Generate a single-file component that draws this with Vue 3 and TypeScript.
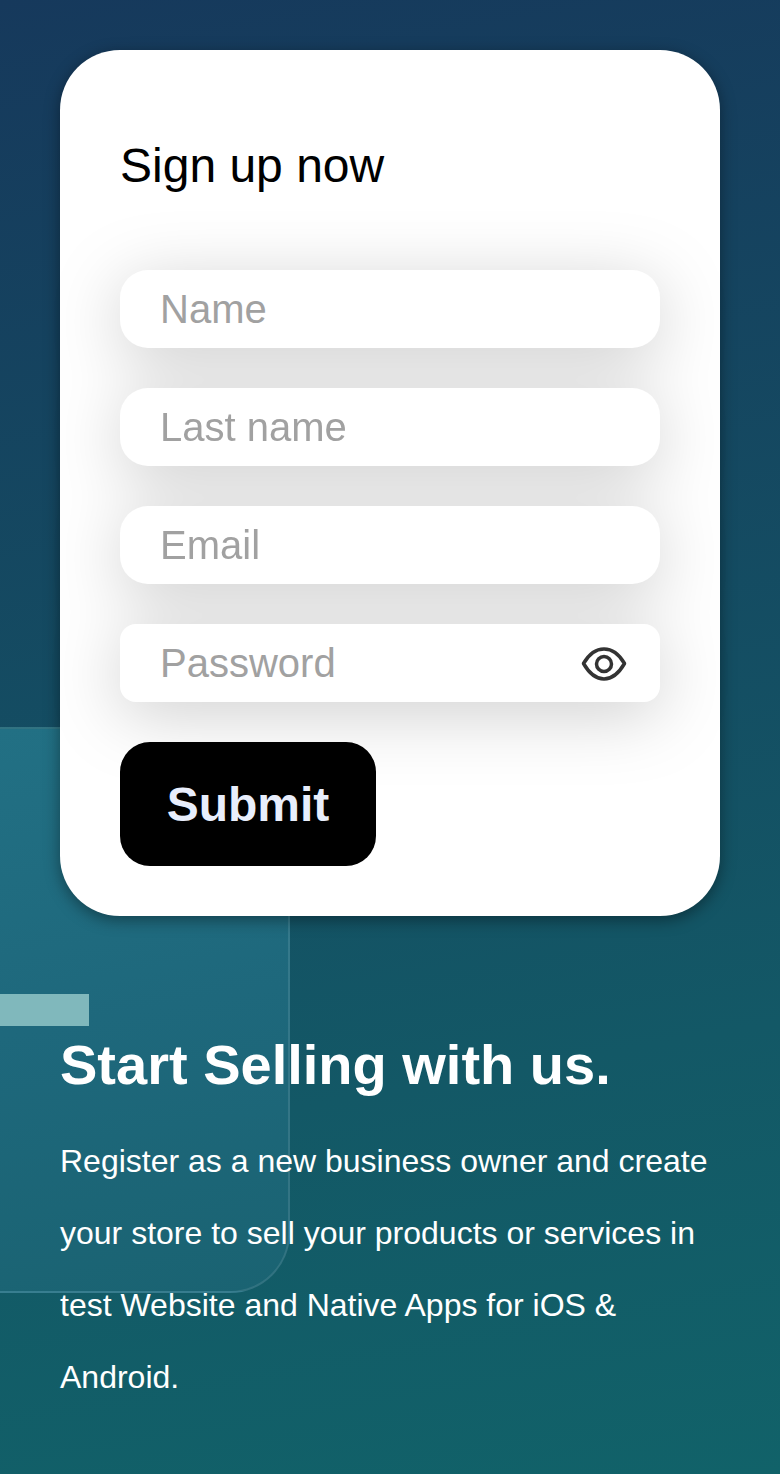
<script setup lang="ts">
const fields = [
  { placeholder: 'Name', type: 'text' },
  { placeholder: 'Last name', type: 'text' },
  { placeholder: 'Email', type: 'email' },
]
</script>

<template>
  <div class="page">
    <div class="panel"></div>
    <div class="bar"></div>
    <form class="card" @submit.prevent>
      <h2 class="title">Sign up now</h2>
      <div class="fields">
        <input v-for="f in fields" :key="f.placeholder" class="input" :type="f.type" :placeholder="f.placeholder" />
        <div class="password">
          <input class="input input-pw" type="password" placeholder="Password" />
          <svg class="eye" width="46" height="34" viewBox="0 0 46 34" fill="none" stroke="#333" stroke-width="3.500" stroke-linejoin="round">
            <path d="M2.500 16.500C8 7 15 2 23 2s15 5 20.500 14.500C38 26 31 32 23 32S8 26 2.500 16.500Z" />
            <circle cx="23" cy="17" r="7.500" />
          </svg>
        </div>
      </div>
      <button class="submit" type="submit">Submit</button>
    </form>
    <section class="intro">
      <h1 class="headline">Start Selling with us.</h1>
      <p class="copy">Register as a new business owner and create your store to sell your products or services in test Website and Native Apps for iOS &amp; Android.</p>
    </section>
  </div>
</template>

<style>
html, body { margin: 0; padding: 0; }
</style>

<style scoped>
.page {
  position: relative;
  width: 780px;
  height: 1474px;
  overflow: hidden;
  box-sizing: border-box;
  padding: 50px 60px 0;
  font-family: "Liberation Sans", Arial, sans-serif;
  background: linear-gradient(170deg, #16395c 0%, #135866 72%, #116269 100%);
}
.panel {
  position: absolute;
  left: -2px;
  top: 727px;
  width: 292px;
  height: 566px;
  box-sizing: border-box;
  border: 2px solid rgba(255, 255, 255, 0.1);
  border-radius: 0 0 60px 0;
  background: linear-gradient(170deg, #227084 0%, #1e687c 50%, #1a6372 100%);
}
.bar {
  position: absolute;
  left: 0;
  top: 994px;
  width: 89px;
  height: 32px;
  background: #80b8bc;
}
.card {
  position: relative;
  box-sizing: border-box;
  width: 660px;
  height: 866px;
  padding: 90px 60px 50px;
  background: #fff;
  border-radius: 60px;
  box-shadow: 0 4px 16px rgba(0, 0, 0, 0.4);
}
.title {
  margin: 0;
  font-size: 48px;
  line-height: 52px;
  font-weight: 400;
  color: #000;
}
.fields {
  display: flex;
  flex-direction: column;
  gap: 40px;
  margin-top: 78px;
  filter: drop-shadow(0 12px 34px rgba(0, 0, 0, 0.19));
}
.input {
  display: block;
  box-sizing: border-box;
  width: 100%;
  height: 78px;
  padding: 0 40px;
  border: 0;
  outline: 0;
  border-radius: 28px;
  background: #fff;
  font-family: inherit;
  font-size: 40px;
  color: #333;
}
.input::placeholder { color: #a1a1a1; opacity: 1; }
.password { position: relative; }
.input-pw { border-radius: 16px; padding-right: 100px; }
.eye {
  position: absolute;
  right: 33px;
  top: 23px;
}
.submit {
  display: block;
  width: 256px;
  height: 124px;
  margin-top: 40px;
  border: 0;
  border-radius: 30px;
  background: #000;
  color: #e8eefc;
  font-family: inherit;
  font-size: 48px;
  font-weight: 700;
}
.intro {
  position: relative;
  margin-top: 112px;
  color: #fff;
}
.headline {
  margin: 0;
  font-size: 56px;
  line-height: 74px;
  font-weight: 700;
}
.copy {
  margin: 23px 0 0;
  font-size: 32px;
  line-height: 72px;
}
</style>
